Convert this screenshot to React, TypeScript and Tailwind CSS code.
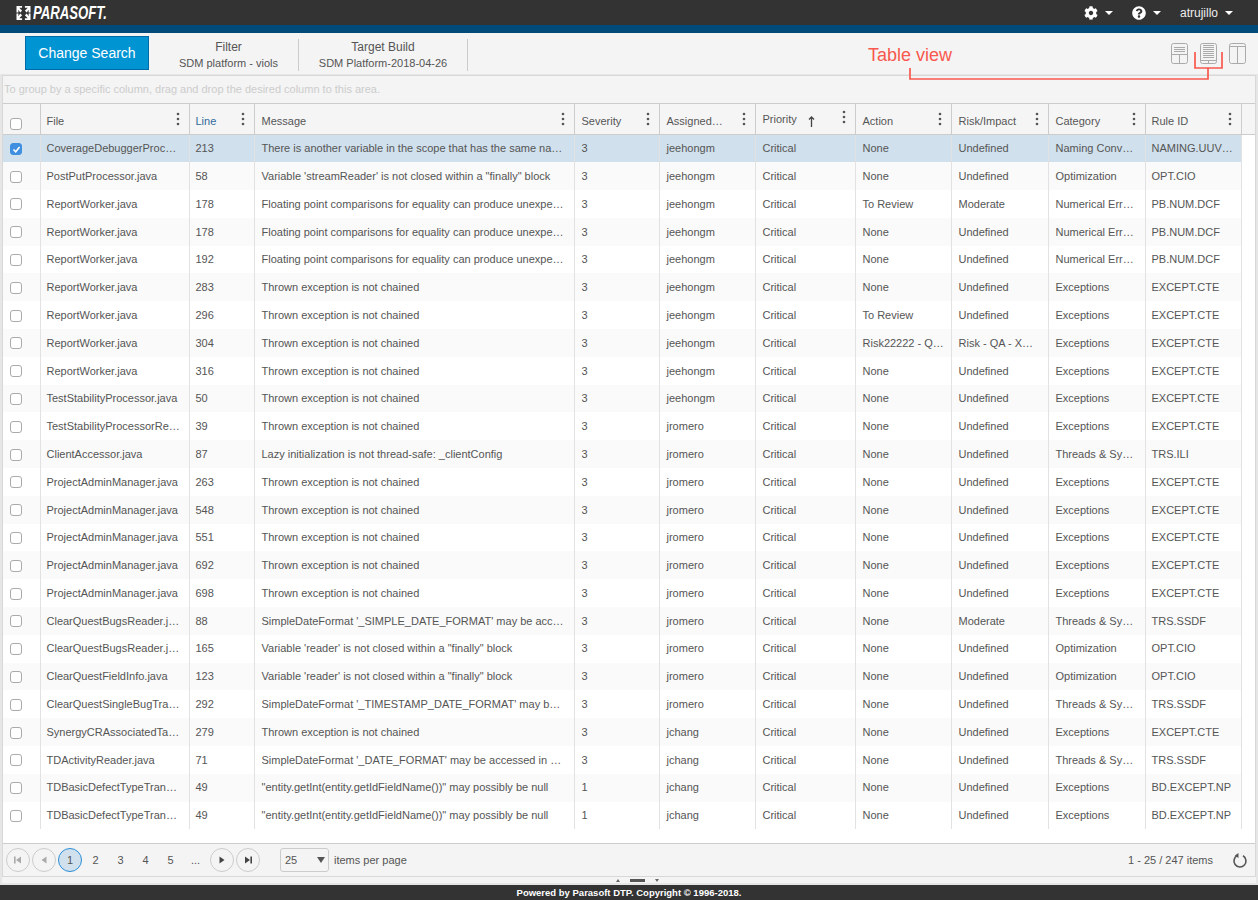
import { FaCog, FaQuestionCircle } from 'react-icons/fa';

const COLUMNS = [
  { label: 'File', width: 149, pad: 'pl-[6px] pr-[8px]' },
  { label: 'Line', width: 65, pad: 'pl-[6px] pr-[8px]', blue: true },
  { label: 'Message', width: 320, pad: 'pl-[7px] pr-[8px]' },
  { label: 'Severity', width: 85, pad: 'pl-[7px] pr-[8px]' },
  { label: 'Assigned…', width: 96, pad: 'pl-[7px] pr-[8px]' },
  { label: 'Priority', width: 100, pad: 'pl-[7px] pr-[8px]', sorted: true },
  { label: 'Action', width: 96, pad: 'pl-[7px] pr-[5px]' },
  { label: 'Risk/Impact', width: 97, pad: 'pl-[7px] pr-[12px]' },
  { label: 'Category', width: 97, pad: 'pl-[7px] pr-[8px]' },
  { label: 'Rule ID', width: 96, pad: 'pl-[6px] pr-[5px]' },
];

const CHAINED = 'Thrown exception is not chained';
const FLOAT = 'Floating point comparisons for equality can produce unexpected results';
const NULLABLE = '"entity.getInt(entity.getIdFieldName())" may possibly be null';
const READER = 'Variable \'reader\' is not closed within a "finally" block';

const ROWS = [
  ['CoverageDebuggerProcessor.java', '213', 'There is another variable in the scope that has the same name as this one', '3', 'jeehongm', 'Critical', 'None', 'Undefined', 'Naming Conventions', 'NAMING.UUVN.LONG'],
  ['PostPutProcessor.java', '58', 'Variable \'streamReader\' is not closed within a "finally" block', '3', 'jeehongm', 'Critical', 'None', 'Undefined', 'Optimization', 'OPT.CIO'],
  ['ReportWorker.java', '178', FLOAT, '3', 'jeehongm', 'Critical', 'To Review', 'Moderate', 'Numerical Errors', 'PB.NUM.DCF'],
  ['ReportWorker.java', '178', FLOAT, '3', 'jeehongm', 'Critical', 'None', 'Undefined', 'Numerical Errors', 'PB.NUM.DCF'],
  ['ReportWorker.java', '192', FLOAT, '3', 'jeehongm', 'Critical', 'None', 'Undefined', 'Numerical Errors', 'PB.NUM.DCF'],
  ['ReportWorker.java', '283', CHAINED, '3', 'jeehongm', 'Critical', 'None', 'Undefined', 'Exceptions', 'EXCEPT.CTE'],
  ['ReportWorker.java', '296', CHAINED, '3', 'jeehongm', 'Critical', 'To Review', 'Undefined', 'Exceptions', 'EXCEPT.CTE'],
  ['ReportWorker.java', '304', CHAINED, '3', 'jeehongm', 'Critical', 'Risk22222 - QA - Extra', 'Risk - QA - Xtra long', 'Exceptions', 'EXCEPT.CTE'],
  ['ReportWorker.java', '316', CHAINED, '3', 'jeehongm', 'Critical', 'None', 'Undefined', 'Exceptions', 'EXCEPT.CTE'],
  ['TestStabilityProcessor.java', '50', CHAINED, '3', 'jeehongm', 'Critical', 'None', 'Undefined', 'Exceptions', 'EXCEPT.CTE'],
  ['TestStabilityProcessorResult.java', '39', CHAINED, '3', 'jromero', 'Critical', 'None', 'Undefined', 'Exceptions', 'EXCEPT.CTE'],
  ['ClientAccessor.java', '87', 'Lazy initialization is not thread-safe: _clientConfig', '3', 'jromero', 'Critical', 'None', 'Undefined', 'Threads & Synchronization', 'TRS.ILI'],
  ['ProjectAdminManager.java', '263', CHAINED, '3', 'jromero', 'Critical', 'None', 'Undefined', 'Exceptions', 'EXCEPT.CTE'],
  ['ProjectAdminManager.java', '548', CHAINED, '3', 'jromero', 'Critical', 'None', 'Undefined', 'Exceptions', 'EXCEPT.CTE'],
  ['ProjectAdminManager.java', '551', CHAINED, '3', 'jromero', 'Critical', 'None', 'Undefined', 'Exceptions', 'EXCEPT.CTE'],
  ['ProjectAdminManager.java', '692', CHAINED, '3', 'jromero', 'Critical', 'None', 'Undefined', 'Exceptions', 'EXCEPT.CTE'],
  ['ProjectAdminManager.java', '698', CHAINED, '3', 'jromero', 'Critical', 'None', 'Undefined', 'Exceptions', 'EXCEPT.CTE'],
  ['ClearQuestBugsReader.java', '88', "SimpleDateFormat '_SIMPLE_DATE_FORMAT' may be accessed in a thread", '3', 'jromero', 'Critical', 'None', 'Moderate', 'Threads & Synchronization', 'TRS.SSDF'],
  ['ClearQuestBugsReader.java', '165', READER, '3', 'jromero', 'Critical', 'None', 'Undefined', 'Optimization', 'OPT.CIO'],
  ['ClearQuestFieldInfo.java', '123', READER, '3', 'jromero', 'Critical', 'None', 'Undefined', 'Optimization', 'OPT.CIO'],
  ['ClearQuestSingleBugTransfer.java', '292', "SimpleDateFormat '_TIMESTAMP_DATE_FORMAT' may be accessed in a thread", '3', 'jromero', 'Critical', 'None', 'Undefined', 'Threads & Synchronization', 'TRS.SSDF'],
  ['SynergyCRAssociatedTasks.java', '279', CHAINED, '3', 'jchang', 'Critical', 'None', 'Undefined', 'Exceptions', 'EXCEPT.CTE'],
  ['TDActivityReader.java', '71', "SimpleDateFormat '_DATE_FORMAT' may be accessed in a thread-unsafe way", '3', 'jchang', 'Critical', 'None', 'Undefined', 'Threads & Synchronization', 'TRS.SSDF'],
  ['TDBasicDefectTypeTransfer.java', '49', NULLABLE, '1', 'jchang', 'Critical', 'None', 'Undefined', 'Exceptions', 'BD.EXCEPT.NP'],
  ['TDBasicDefectTypeTransfer.java', '49', NULLABLE, '1', 'jchang', 'Critical', 'None', 'Undefined', 'Exceptions', 'BD.EXCEPT.NP'],
];

function Caret() {
  return <span className="ml-[7px] h-0 w-0 border-x-[4px] border-t-[4px] border-x-transparent border-t-white" />;
}

function Kebab({ raised }: { raised?: boolean }) {
  return (
    <svg width="4" height="14" viewBox="0 0 4 14" className={`shrink-0 fill-[#555] ${raised ? 'mb-[4px]' : ''}`}>
      <circle cx="2" cy="2" r="1.3" />
      <circle cx="2" cy="7" r="1.3" />
      <circle cx="2" cy="12" r="1.3" />
    </svg>
  );
}

function Checkbox({ checked }: { checked?: boolean }) {
  return (
    <span className={`flex h-[12px] w-[12px] items-center justify-center rounded-[3px] border ${checked ? 'border-[#3f8fe0] bg-[#3f8fe0]' : 'border-[#aaa] bg-white'}`}>
      {checked && (
        <svg width="9" height="9" viewBox="0 0 9 9" fill="none" stroke="white" strokeWidth="1.6">
          <path d="M1.5 4.5 L3.7 6.8 L7.6 2" />
        </svg>
      )}
    </span>
  );
}

function LogoMark() {
  return (
    <svg width="15" height="14" viewBox="0 0 15 15" className="fill-white">
      <path d="M0 0h6v2H3l3 3-2 2-2-3v3H0zM15 0v7h-2V4l-2 3-2-2 3-3H9V0zM0 15V8h2v3l2-3 2 2-3 3h3v2zM15 15H9v-2h3l-3-3 2-2 2 3V8h2z" />
    </svg>
  );
}

function ViewIcon({ kind }: { kind: 'split' | 'table' | 'columns' }) {
  return (
    <svg width="17" height="21" viewBox="0 0 17 21" fill="none" stroke="#aaa" strokeWidth="1">
      <rect x="0.5" y="0.5" width="16" height="20" rx="2" />
      {kind === 'split' && <path d="M3 4.500h11M3 6.500h11M3 8.500h11M1 11.500h15M8.500 11.500v9" />}
      {kind === 'table' && <path d="M3 2.500h11M3 4.500h11M3 6.500h11M3 8.500h11M3 10.500h11M3 12.500h11M3 14.500h11M1 17.500h15M8.500 17.500v3" />}
      {kind === 'columns' && <path d="M1 3.500h15M8.500 3.500v17" />}
    </svg>
  );
}

function PagerButton({ path, dark, bar }: { path: string; dark?: boolean; bar?: 'left' | 'right' }) {
  const color = dark ? '#444' : '#aaa';
  return (
    <span className="flex h-[24px] w-[24px] items-center justify-center rounded-full border border-[#ccc]">
      <svg width="10" height="10" viewBox="0 0 10 10" fill={color}>
        <path d={path} />
        {bar === 'left' && <rect x="1" y="1.500" width="1.600" height="7" />}
        {bar === 'right' && <rect x="7.400" y="1.500" width="1.600" height="7" />}
      </svg>
    </span>
  );
}

export default function App() {
  return (
    <div className="relative flex h-[900px] w-[1258px] flex-col overflow-hidden bg-[#e6e6e6] font-['Liberation_Sans',Arial,sans-serif] text-[#555]">
      {/* Top bar */}
      <div className="flex h-[25px] shrink-0 items-center justify-between bg-[#333] pl-[16px] pr-[25px] text-white">
        <div className="flex items-center gap-[2px]">
          <LogoMark />
          <span className="inline-block origin-left scale-x-[0.73] text-[18px] font-bold italic leading-none">PARASOFT.</span>
        </div>
        <div className="flex items-center text-[12px]">
          <FaCog className="text-[14px]" />
          <Caret />
          <FaQuestionCircle className="ml-[19px] text-[14px]" />
          <Caret />
          <span className="ml-[19px] text-[#eee]">atrujillo</span>
          <Caret />
        </div>
      </div>
      <div className="h-[8px] shrink-0 bg-[#004b7a]" />

      {/* Toolbar */}
      <div className="flex h-[41px] shrink-0 items-center bg-[#f4f4f4] pl-[25px] pr-[12px]">
        <button className="mb-[1px] h-[34px] w-[124px] border border-[#006ba6] bg-[#0094d3] text-[14px] text-white">Change Search</button>
        <div className="ml-[10px] mt-[3px] flex h-[32px] w-[140px] flex-col items-center justify-center border-r border-[#ccc] text-[#555]">
          <span className="text-[12px] leading-[15px]">Filter</span>
          <span className="mt-[1px] text-[11px] leading-[14px]">SDM platform - viols</span>
        </div>
        <div className="mt-[3px] flex h-[32px] w-[169px] flex-col items-center justify-center border-r border-[#ccc] text-[#555]">
          <span className="text-[12px] leading-[15px]">Target Build</span>
          <span className="mt-[1px] text-[11px] leading-[14px]">SDM Platform-2018-04-26</span>
        </div>
        <div className="ml-auto mb-[1px] flex items-center gap-[12px]">
          <ViewIcon kind="split" />
          <ViewIcon kind="table" />
          <ViewIcon kind="columns" />
        </div>
      </div>

      {/* Grid */}
      <div className="ml-[2px] mr-[2px] mt-[1px] flex h-[802px] shrink-0 flex-col border border-[#d8d8d8] bg-white">
        <div className="flex h-[27px] shrink-0 items-center bg-[#f4f4f4] pl-[1px] text-[11px] text-[#ccc]">
          To group by a specific column, drag and drop the desired column to this area.
        </div>

        <div className="flex-1 overflow-hidden">
          <table className="w-[1252px] table-fixed border-collapse text-[11px]">
            <colgroup>
              <col className="w-[37px]" />
              {COLUMNS.map((col) => (
                <col key={col.label} style={{ width: col.width }} />
              ))}
              <col className="w-[15px]" />
            </colgroup>
            <thead>
              <tr className="h-[31px] bg-[#f5f5f5]">
                <th className="border-y border-r border-[#ccc] pl-[7px] pt-[9px] align-middle">
                  <Checkbox />
                </th>
                {COLUMNS.map((col) => (
                  <th key={col.label} className="border-y border-r border-[#ccc] p-0 font-normal">
                    <div className={`flex items-center justify-between pr-[9px] ${col.pad.split(' ')[0] === 'pl-[7px]' ? 'pl-[7px]' : 'pl-[6px]'}`}>
                      <span className={`flex items-center ${col.sorted ? '' : 'pt-[4px]'} ${col.blue ? 'text-[#2f6a9c]' : ''}`}>
                        {col.label}
                        {col.sorted && (
                          <svg width="7" height="11" viewBox="0 0 7 11" fill="none" stroke="#444" strokeWidth="1.300" className="ml-[11px] mt-[4px]">
                            <path d="M3.500 11V1M1 3.500 3.500 1 6 3.500" />
                          </svg>
                        )}
                      </span>
                      <Kebab raised={col.sorted} />
                    </div>
                  </th>
                ))}
                <th className="border-y border-[#ccc]" />
              </tr>
            </thead>
            <tbody>
              {ROWS.map((row, i) => (
                <tr key={i} className={`h-[27.8px] ${i === 0 ? 'bg-[#d0e0ec]' : i % 2 === 1 ? 'bg-[#fafafa]' : 'bg-white'}`}>
                  <td className="border-r border-[#e2e2e2] pl-[7px] pt-[1px]">
                    <Checkbox checked={i === 0} />
                  </td>
                  {row.map((cell, j) => (
                    <td key={j} className={`truncate border-r border-[#e2e2e2] py-0 ${COLUMNS[j].pad}`}>
                      {cell}
                    </td>
                  ))}
                  <td className="bg-white" />
                </tr>
              ))}
            </tbody>
          </table>
        </div>

        {/* Pager */}
        <div className="flex h-[33px] shrink-0 items-center border-t border-[#ccc] bg-[#f4f4f4] pl-[3px] pr-[7px] text-[11px]">
          <div className="flex items-center gap-[2px]">
            <PagerButton path="M8 1.500v7L3 5z" bar="left" />
            <PagerButton path="M7.500 1.500v7L2.500 5z" />
          </div>
          <span className="ml-[2px] flex h-[24px] w-[24px] items-center justify-center rounded-full border border-[#2a8fd8] bg-[#d0e0ec]">1</span>
          <div className="ml-[1px] flex items-center">
            {['2', '3', '4', '5', '...'].map((page) => (
              <span key={page} className="flex h-[24px] w-[25px] items-center justify-center">{page}</span>
            ))}
          </div>
          <div className="ml-[2px] flex items-center gap-[2px]">
            <PagerButton path="M2.500 1.500v7L7.500 5z" dark />
            <PagerButton path="M2 1.500v7L7 5z" bar="right" dark />
          </div>
          <span className="ml-[20px] flex h-[24px] w-[49px] items-center justify-between rounded-[3px] border border-[#ccc] pl-[4px] pr-[3px]">
            25
            <span className="h-0 w-0 border-x-[4px] border-t-[6px] border-x-transparent border-t-[#555]" />
          </span>
          <span className="ml-[5px]">items per page</span>
          <span className="ml-auto">1 - 25 / 247 items</span>
          <svg width="16" height="16" viewBox="0 0 16 16" fill="none" stroke="#555" strokeWidth="1.6" className="ml-[19px]">
            <path d="M5.500 3.500A6 6 0 1 0 11 3.800" />
            <path d="M7.500 1v5L3.800 3.500z" fill="#555" stroke="none" transform="translate(-1 0)" />
          </svg>
        </div>
      </div>

      {/* Splitter */}
      <div className="mx-[2px] flex h-[6px] shrink-0 items-center justify-center gap-[10px] bg-[#f4f4f4] pl-[16px]">
        <span className="h-0 w-0 border-x-[2px] border-b-[3px] border-x-transparent border-b-[#666]" />
        <span className="h-[3px] w-[15px] bg-[#555]" />
        <span className="h-0 w-0 border-x-[2px] border-t-[3px] border-x-transparent border-t-[#666]" />
      </div>
      <div className="flex-1" />

      {/* Footer */}
      <div className="flex h-[15px] shrink-0 items-center justify-center bg-[#333] pt-[1px] text-[9.500px] font-bold text-white">
        Powered by Parasoft DTP. Copyright © 1996-2018.
      </div>

      {/* Annotation */}
      <span className="absolute left-[868px] top-[45px] text-[18px] leading-[21px] text-[#f8584d]">Table view</span>
      <svg width="330" height="32" viewBox="0 0 330 32" fill="none" stroke="#f8584d" strokeWidth="1.700" className="absolute left-[900px] top-[50px]">
        <path d="M10 18V29H308V18M295 2V18H322V2" />
      </svg>
    </div>
  );
}
